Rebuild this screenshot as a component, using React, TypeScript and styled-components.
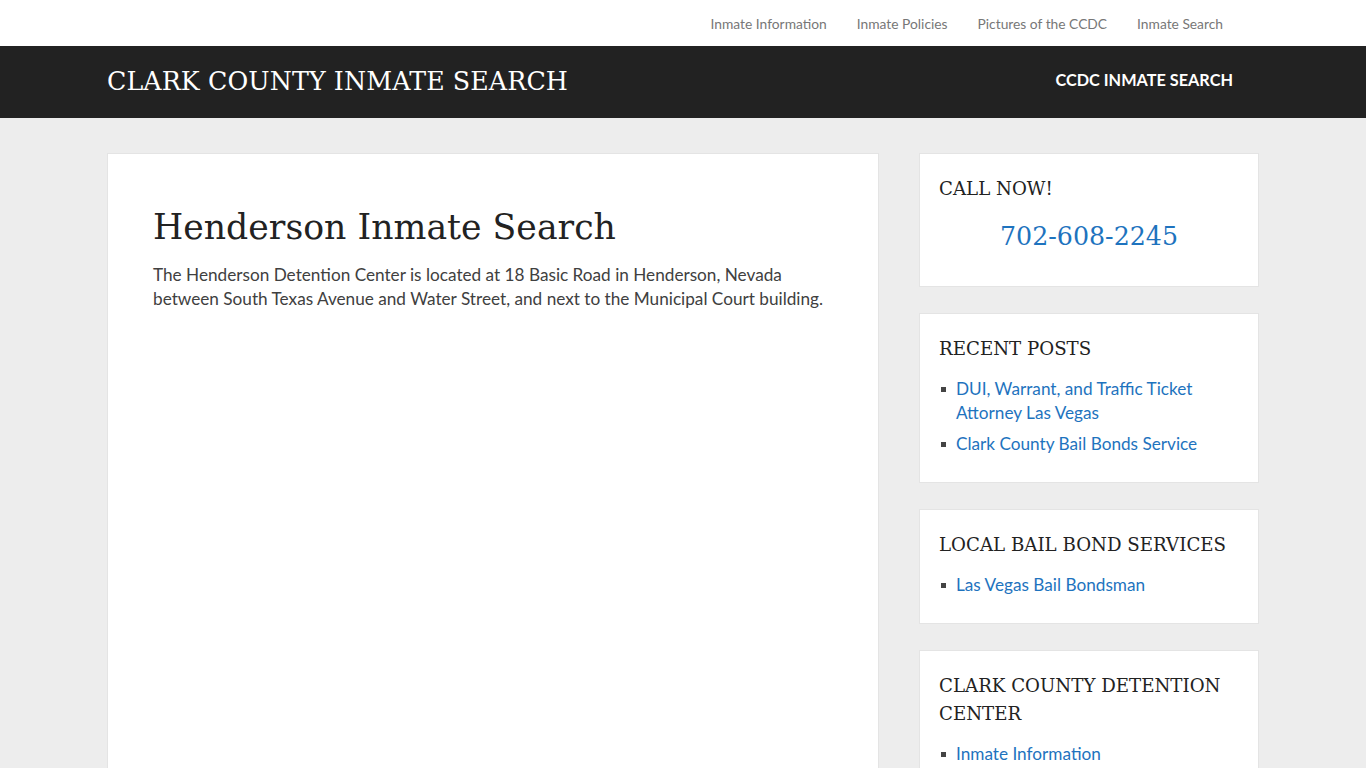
import React from "react";
import styled, { createGlobalStyle } from "styled-components";

const SLAB = `"DejaVu Serif", "Liberation Serif", serif`;
const SANS = `Lato, "Open Sans", "Liberation Sans", sans-serif`;

const topLinks = [
  "Inmate Information",
  "Inmate Policies",
  "Pictures of the CCDC",
  "Inmate Search",
];

const widgets = [
  {
    title: "RECENT POSTS",
    links: [
      "DUI, Warrant, and Traffic Ticket Attorney Las Vegas",
      "Clark County Bail Bonds Service",
    ],
  },
  { title: "LOCAL BAIL BOND SERVICES", links: ["Las Vegas Bail Bondsman"] },
  {
    title: "CLARK COUNTY DETENTION CENTER",
    links: ["Inmate Information", "Inmate Policies"],
  },
];

const App: React.FC = () => {
  return (
    <>
      <GlobalStyle />
      <TopBar>
        <TopNav>
          {topLinks.map((l) => (
            <TopLink key={l} href="#">
              {l}
            </TopLink>
          ))}
        </TopNav>
      </TopBar>
      <Header>
        <HeaderInner>
          <SiteTitle>CLARK COUNTY INMATE SEARCH</SiteTitle>
          <HeaderLink href="#">CCDC INMATE SEARCH</HeaderLink>
        </HeaderInner>
      </Header>
      <Content>
        <Main>
          <PageTitle>Henderson Inmate Search</PageTitle>
          <Paragraph>
            The Henderson Detention Center is located at 18 Basic Road in
            Henderson, Nevada between South Texas Avenue and Water Street, and
            next to the Municipal Court building.
          </Paragraph>
        </Main>
        <Sidebar>
          <Widget>
            <WidgetTitle>CALL NOW!</WidgetTitle>
            <Phone href="#">702-608-2245</Phone>
          </Widget>
          {widgets.map((w) => (
            <Widget key={w.title}>
              <WidgetTitle>{w.title}</WidgetTitle>
              <LinkList>
                {w.links.map((l) => (
                  <LinkItem key={l}>
                    <a href="#">{l}</a>
                  </LinkItem>
                ))}
              </LinkList>
            </Widget>
          ))}
        </Sidebar>
      </Content>
    </>
  );
};

const GlobalStyle = createGlobalStyle`
  body {
    margin: 0;
    background: #ededed;
    font-family: ${SANS};
    color: #404040;
  }
  a { text-decoration: none; }
`;

const TopBar = styled.div`
  background: #fff;
  height: 46px;
`;
const TopNav = styled.nav`
  width: 1152px;
  margin: 0 auto;
  height: 100%;
  display: flex;
  justify-content: flex-end;
  align-items: center;
  gap: 30px;
  padding-right: 36px;
  box-sizing: border-box;
`;
const TopLink = styled.a`
  font-size: 13.8px;
  color: #777;
`;

const Header = styled.header`
  background: #222;
  height: 72px;
`;
const HeaderInner = styled.div`
  width: 1152px;
  margin: 0 auto;
  height: 100%;
  display: flex;
  align-items: center;
  justify-content: space-between;
  padding-right: 26px;
  box-sizing: border-box;
`;
const SiteTitle = styled.div`
  font-family: ${SLAB};
  font-size: 25.3px;
  line-height: 32px;
  color: #fff;
  letter-spacing: 0.1px;
`;
const HeaderLink = styled.a`
  font-size: 16.3px;
  line-height: 20px;
  font-weight: 700;
  color: #fff;
  margin-bottom: 4px;
`;

const Content = styled.div`
  width: 1152px;
  margin: 35px auto 0;
  display: flex;
  gap: 40px;
  align-items: flex-start;
`;
const Main = styled.main`
  width: 772px;
  height: 640px;
  box-sizing: border-box;
  background: #fff;
  border: 1px solid #e4e4e4;
  padding: 49px 45px 45px;
`;
const PageTitle = styled.h1`
  font-family: ${SLAB};
  font-weight: 300;
  font-size: 34.7px;
  line-height: 48px;
  color: #222;
  margin: 0 0 12px;
`;
const Paragraph = styled.p`
  margin: 0;
  font-size: 17.2px;
  line-height: 24px;
  color: #404040;
`;

const Sidebar = styled.aside`
  width: 340px;
  display: flex;
  flex-direction: column;
  gap: 26px;
`;
const Widget = styled.section`
  background: #fff;
  border: 1px solid #e4e4e4;
  padding: 21px 19px 26px;
`;
const WidgetTitle = styled.h3`
  font-family: ${SLAB};
  font-weight: 400;
  font-size: 18.2px;
  line-height: 28px;
  color: #222;
  margin: 0 0 14px;
`;
const Phone = styled.a`
  display: block;
  text-align: center;
  font-family: ${SLAB};
  font-size: 25.3px;
  line-height: 36px;
  color: #1e73be;
  margin-top: 16px;
  margin-bottom: 5px;
`;
const LinkList = styled.ul`
  margin: 0;
  padding: 0;
  list-style: none;
`;
const LinkItem = styled.li`
  position: relative;
  padding-left: 17px;
  font-size: 17.2px;
  line-height: 24px;
  & + & { margin-top: 7px; }
  &::before {
    content: "";
    position: absolute;
    left: 2px;
    top: 10px;
    width: 5px;
    height: 5px;
    background: #444;
  }
  a { color: #1e73be; }
`;

export default App;
